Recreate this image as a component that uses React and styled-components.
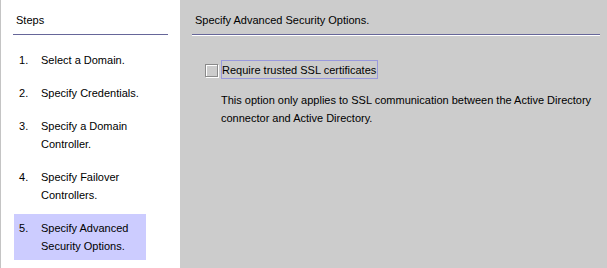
import styled, { createGlobalStyle } from "styled-components";

const GlobalStyle = createGlobalStyle`
    html, body {
        margin: 0;
        padding: 0;
        background: #cccccc;
    }
    body {
        font-family: "Liberation Sans", Arial, sans-serif;
        font-size: 11px;
        color: #000;
    }
`;

const steps = [
    "Select a Domain.",
    "Specify Credentials.",
    "Specify a Domain Controller.",
    "Specify Failover Controllers.",
    "Specify Advanced Security Options.",
];

export default function App() {
    const current = 4;

    return <Wizard>
        <GlobalStyle />
        <StepsPanel>
            <PanelHeader>Steps</PanelHeader>
            <StepList>
                {steps.map((step, index) => (
                    <StepItem key={index} $active={index === current}>
                        <StepNumber>{index + 1}.</StepNumber>
                        <StepText>{step}</StepText>
                    </StepItem>
                ))}
            </StepList>
        </StepsPanel>

        <ContentPanel>
            <PanelHeader $light>Specify Advanced Security Options.</PanelHeader>
            <CheckRow>
                <CheckBox />
                <CheckLabel>Require trusted SSL certificates</CheckLabel>
            </CheckRow>
            <Description>
                This option only applies to SSL communication between the Active Directory connector and Active Directory.
            </Description>
        </ContentPanel>
    </Wizard>
}

const Wizard = styled.div`
    display: flex;
    width: 607px;
    height: 268px;
    overflow: hidden;
    line-height: 18px;
`

const StepsPanel = styled.div`
    box-sizing: border-box;
    width: 180px;
    flex-shrink: 0;
    background: #ffffff;
    border-left: 1px solid #c4c4c4;
    padding-left: 12px;
    padding-right: 12px;
`

const PanelHeader = styled.div`
    padding: 11px 0 5px 3px;
    border-bottom: 1px solid #666699;
    box-shadow: ${props => props.$light ? "0 1px 0 #ffffff" : "none"};
`

const StepList = styled.div`
    display: flex;
    flex-direction: column;
    gap: 5px;
    margin-top: 11px;
    margin-left: 1px;
`

const StepItem = styled.div`
    display: flex;
    width: 132px;
    padding: 5px 0 5px 5px;
    box-sizing: border-box;
    background: ${props => props.$active ? "#ccccff" : "transparent"};
`

const StepNumber = styled.div`
    width: 22px;
    flex-shrink: 0;
`

const StepText = styled.div`
    width: 105px;
`

const ContentPanel = styled.div`
    flex: 1;
    background: #cccccc;
    padding: 0 7px 0 12px;
`

const CheckRow = styled.div`
    display: flex;
    align-items: flex-start;
    gap: 3px;
    margin-top: 25px;
    margin-left: 13px;
`

const CheckBox = styled.span`
    display: block;
    width: 11px;
    height: 11px;
    margin-top: 4px;
    border: 1px solid #8a8a8a;
    box-shadow: 1px 1px 0 #ffffff, inset 1px 1px 0 #ffffff;
    background: #cccccc;
`

const CheckLabel = styled.span`
    display: block;
    border: 1px solid #9999dd;
    padding: 1px 1px 0 0;
    line-height: 16px;
`

const Description = styled.p`
    margin: 12px 0 0 29px;
    width: 378px;
`
